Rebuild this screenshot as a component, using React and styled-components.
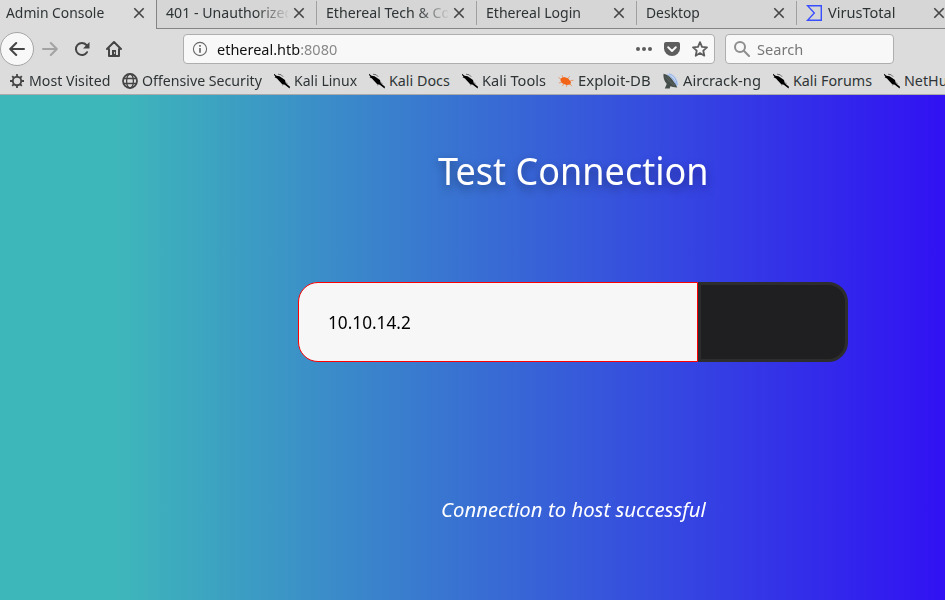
import React from "react";
import styled, { createGlobalStyle } from "styled-components";

const Global = createGlobalStyle`
  * { box-sizing: border-box; }
  html, body { margin: 0; overflow: hidden; }
  body { font-family: "Noto Sans", "Open Sans", sans-serif; }
  svg { display: block; flex: none; }
`;

const Window = styled.div`
  display: flex;
  flex-direction: column;
  width: 945px;
  height: 600px;
  overflow: hidden;
  background: #dcdcdc;
`;

const TabStrip = styled.div`
  display: flex;
  flex: none;
  height: 29px;
`;

const Tab = styled.div`
  display: flex;
  flex: none;
  align-items: center;
  width: ${(p) => (p.$active ? 156 : 160)}px;
  height: 29px;
  padding: 0 11px 3px ${(p) => (p.$active ? 6 : 9)}px;
  color: #2e3436;
  background: ${(p) => (p.$active ? "#dcdcdc" : "#d6d6d6")};
  border-bottom: ${(p) => (p.$active ? "0" : "1px solid #858585")};
  ${(p) => p.$first && "border-left: 1px solid #858585;"}
`;

const Divider = styled.i`
  flex: none;
  align-self: flex-start;
  width: 1px;
  height: 24px;
  margin: 1px 9px 0 -9px;
  background: #a0a0a0;
`;

const TabTitle = styled.span`
  flex: 1;
  min-width: 0;
  margin-right: 5px;
  overflow: hidden;
  white-space: nowrap;
  font-size: 14px;
  line-height: 24px;
  ${(p) => p.$fade && "mask-image: linear-gradient(to right, #000 74%, transparent 102%);"}
`;

const Fit = styled.span`
  display: inline-block;
  white-space: nowrap;
  transform: scaleX(${(p) => p.$x || 1});
  transform-origin: left center;
`;

const Toolbar = styled.div`
  display: flex;
  flex: none;
  align-items: center;
  height: 40px;
`;

const BackButton = styled.div`
  display: flex;
  flex: none;
  align-items: center;
  justify-content: center;
  width: 34px;
  height: 34px;
  border: 1px solid #a5a5a5;
  border-radius: 50%;
  background: #f8f8f8;
`;

const ToolIcon = styled.div`
  display: flex;
  justify-content: center;
  flex: none;
  width: 32px;
`;

const Favicon = styled.div`
  flex: none;
  width: 22px;
`;

const Field = styled.div`
  display: flex;
  flex: none;
  align-items: center;
  width: ${(p) => p.$w}px;
  height: 30px;
  margin-left: ${(p) => p.$gap}px;
  padding: 0 6px 0 8px;
  border: 1px solid #aeaeae;
  border-radius: 4px;
  background: #f8f8f8;
  color: #777;
  font-size: 14.3px;
`;

const Address = styled.span`
  flex: 1;
  margin-left: 9px;
  color: #888;
  b { font-weight: 400; color: #111; }
`;

const Query = styled.span`
  margin-left: 7px;
`;

const FieldIcons = styled.div`
  display: flex;
  align-items: center;
  gap: 12px;
`;

const Bookmarks = styled.div`
  display: flex;
  flex: none;
  height: 26px;
  padding-left: 9px;
  border-bottom: 1px solid #aaa;
  color: #2e3436;
`;

const Bookmark = styled.div`
  display: flex;
  flex: none;
  align-items: center;
  gap: 4px;
  width: ${(p) => p.$w}px;
  padding-bottom: 1px;
  font-size: 14.3px;
  line-height: 20px;
`;

const Page = styled.main`
  display: flex;
  flex: 1;
  flex-direction: column;
  align-items: center;
  padding-left: 201px;
  background: linear-gradient(to right, #3eb7ba 114px, #3111f3 945px);
`;

const Heading = styled.h1`
  margin: 45px 0 0;
  height: 60px;
  width: 271px;
  color: #fff;
  font-size: 39px;
  font-weight: 400;
  line-height: 60px;
  text-shadow: 0 4px 10px rgba(0, 0, 0, 0.4);
`;

const Form = styled.div`
  display: flex;
  width: 550px;
  height: 80px;
  margin-top: 82px;
`;

const HostInput = styled.div`
  width: 400px;
  padding-left: 29px;
  border: 1px solid #f00;
  border-radius: 20px 0 0 20px;
  background: #f7f7f7;
  color: #000;
  font-size: 17.4px;
  line-height: 78px;
`;

const Submit = styled.div`
  width: 150px;
  border: 3px solid #2d2d2d;
  border-radius: 0 20px 20px 0;
  background: #1f1f21;
`;

const Result = styled.p`
  margin: 131px 0 0;
  width: 264px;
  white-space: nowrap;
  color: #fff;
  font-size: 20.4px;
  font-style: italic;
  line-height: 32px;
`;

const Close = () => (
  <svg width="12" height="12" viewBox="0 0 12 12" stroke="#454545" strokeWidth="1.6">
    <path d="M1.3 1.3l9.4 9.4M10.7 1.3l-9.4 9.4" />
  </svg>
);

const Arrow = ({ flip, color }) => (
  <svg width="16" height="16" viewBox="0 0 16 16" fill="none" stroke={color} strokeWidth="2" strokeLinecap="round" strokeLinejoin="round" transform={flip ? "scale(-1 1)" : undefined}>
    <path d="M15 8H1.5M7.2 2L1.2 8l6 6" />
  </svg>
);

const Reload = () => (
  <svg width="16" height="16" viewBox="0 0 16 16" fill="none" stroke="#454545" strokeWidth="2" strokeLinecap="round">
    <path d="M13 11.2A6 6 0 1 1 12.4 4" />
    <path d="M15.5 1v6.5H9z" fill="#454545" stroke="none" />
  </svg>
);

const Home = () => (
  <svg width="16" height="16" viewBox="0 0 16 16" fill="none" stroke="#454545" strokeWidth="2" strokeLinejoin="round" strokeLinecap="round">
    <path d="M1 8l7-7 7 7M3 8v7h10V8" />
    <path d="M6 15V9h4v6z" fill="#454545" stroke="none" />
    <path d="M8.6 11.3v1.2" stroke="#dcdcdc" strokeWidth="1" />
  </svg>
);

const Info = () => (
  <svg width="16" height="16" viewBox="0 0 16 16" fill="none" stroke="#696969">
    <circle cx="8" cy="8" r="6.6" strokeWidth="1.1" />
    <path d="M8 7v4.8M8 4v1.7" strokeWidth="1.7" />
  </svg>
);

const Dots = () => (
  <svg width="16" height="16" viewBox="0 0 16 16" fill="#5d5d5d">
    <circle cx="2" cy="8" r="2" /><circle cx="8" cy="8" r="2" /><circle cx="14" cy="8" r="2" />
  </svg>
);

const Pocket = () => (
  <svg width="16" height="16" viewBox="0 0 16 16">
    <path d="M2 1h12a2 2 0 0 1 2 2v4.5a8 7.5 0 0 1-16 0V3a2 2 0 0 1 2-2z" fill="#5d5d5d" />
    <path d="M4.2 6.3L8 9.9l3.8-3.6" fill="none" stroke="#f8f8f8" strokeWidth="2" strokeLinecap="round" strokeLinejoin="round" />
  </svg>
);

const Star = () => (
  <svg width="16" height="16" viewBox="0 0 16 16" fill="none" stroke="#5d5d5d" strokeWidth="1.8" strokeLinejoin="round">
    <path d="M8 1.2l2 4.6 5 .5-3.7 3.4 1 5L8 12.1l-4.3 2.6 1-5L1 6.3l5-.5z" />
  </svg>
);

const Magnifier = () => (
  <svg width="16" height="16" viewBox="0 0 16 16" fill="none" stroke="#8e8e8e" strokeWidth="2" strokeLinecap="round">
    <circle cx="6" cy="6" r="5" /><path d="M9.8 9.8l5.2 5.2" />
  </svg>
);

const VirusTotal = () => (
  <svg width="16" height="16" viewBox="0 0 16 16" fill="none" stroke="#394eff" strokeWidth="1.4">
    <path d="M1.5 .7H15.3v14.6H1.5L8.3 8z" />
  </svg>
);

const Gear = () => (
  <svg width="16" height="16" viewBox="0 0 16 16" fill="none" stroke="#454545">
    <circle cx="8" cy="8" r="4.2" strokeWidth="1.9" />
    <path d="M8 1v2.5M8 12.5V15M1 8h2.5M12.5 8H15M3.2 3.2L5 5M11 11l1.8 1.8M12.8 3.2L11 5M5 11l-1.8 1.8" strokeWidth="1.8" />
  </svg>
);

const Globe = () => (
  <svg width="16" height="16" viewBox="0 0 16 16" fill="none" stroke="#454545" strokeWidth="1.3">
    <circle cx="8" cy="8" r="7" strokeWidth="1.8" />
    <ellipse cx="8" cy="8" rx="3.4" ry="7" />
    <path d="M1.6 5.5h12.8M1.6 10.5h12.8" />
  </svg>
);

const Kali = () => (
  <svg width="16" height="16" viewBox="0 0 16 16" fill="#000">
    <path d="M0 .8l2.5 2 3 .4 3 2L11 7l.8 3.2 4.2 3.6-.4 1.6-4.8-3.6-2.8-.8L5.2 8 3 5.4.6 4.2l.8-.6L0 2z" />
    <path d="M4 1.2l3.2.6 2 2M9 11l-.4 1.4M11.5 10l2 .3" stroke="#000" strokeWidth=".5" fill="none" />
  </svg>
);

const Exploit = () => (
  <svg width="16" height="16" viewBox="0 0 16 16" fill="#f26418" stroke="#f26418">
    <path d="M2.5 5.5L6 4l4 1.2 3 3.8-.8 2.6-3.6.4-4-1.5-2-2.5z" stroke="none" />
    <path d="M2.5 6L.4 4.2M5 5L4 2.2M9.5 5.5l2.3-2.2M12 8l3.6-.8M4 9.3l-3.2.7M6 10.5l-1.7 2.6M9 11.5l-.6 2.4M12 11l2 2.2" strokeWidth=".9" opacity=".6" />
  </svg>
);

const Aircrack = () => (
  <svg width="16" height="16" viewBox="0 0 16 16">
    <path d="M3.5 .5Q14 0 15.5 12L13.5 14z" fill="#c5d5ef" />
    <path d="M6 .8q7.5 2 8.2 11M4.5 2q7 3 8.6 10" fill="none" stroke="#8fb0e6" strokeWidth="1" />
    <path d="M.5 .8C4 1.4 7 3.6 9.2 6.6s4 5.6 5 7.8C9.500 14.600 5.200 13 3 10S.200 4 .5 .8z" fill="#454e4b" />
    <path d="M4 10.500L1.800 15.500h5L7.500 12z" fill="#454e4b" />
    <path d="M2 3.500q4 6 10 9.800M4.500 3q2 5 7 9" fill="none" stroke="#68736f" strokeWidth=".5" />
  </svg>
);

const tabs = [
  { title: "Admin Console", active: true, x: 0.99 },
  { title: "401 - Unauthorized", fade: true, first: true, x: 1.01 },
  { title: "Ethereal Tech & Co", fade: true, x: 1.01 },
  { title: "Ethereal Login", x: 1.005 },
  { title: "Desktop", x: 0.99 },
  { title: "VirusTotal", icon: true, x: 1.04 },
];

const bookmarks = [
  ["Most Visited", Gear, 113, 0.99],
  ["Offensive Security", Globe, 152, 0.99],
  ["Kali Linux", Kali, 95, 0.98],
  ["Kali Docs", Kali, 93, 1],
  ["Kali Tools", Kali, 96, 1.02],
  ["Exploit-DB", Exploit, 105, 1.04],
  ["Aircrack-ng", Aircrack, 110, 1.03],
  ["Kali Forums", Kali, 111, 1],
  ["NetHu", Kali, 62, 1],
];

export default function App() {
  return (
    <Window>
      <Global />
      <TabStrip>
        {tabs.map((t, i) => (
          <Tab key={t.title} $active={t.active} $first={t.first}>
            {i > 1 && <Divider />}
            {t.icon && <Favicon><VirusTotal /></Favicon>}
            <TabTitle $fade={t.fade}><Fit $x={t.x}>{t.title}</Fit></TabTitle>
            <Close />
          </Tab>
        ))}
      </TabStrip>
      <Toolbar>
        <BackButton><Arrow color="#454545" /></BackButton>
        <ToolIcon><Arrow flip color="#a3a3a3" /></ToolIcon>
        <ToolIcon><Reload /></ToolIcon>
        <ToolIcon><Home /></ToolIcon>
        <Field $w={532} $gap={53}>
          <Info />
          <Address><Fit $x={1.013}><b>ethereal.htb</b>:8080</Fit></Address>
          <FieldIcons><Dots /><Pocket /><Star /></FieldIcons>
        </Field>
        <Field $w={169} $gap={10}>
          <Magnifier />
          <Query><Fit $x={1.02}>Search</Fit></Query>
        </Field>
      </Toolbar>
      <Bookmarks>
        {bookmarks.map(([label, Icon, w, x]) => (
          <Bookmark key={label} $w={w}><Icon /><Fit $x={x}>{label}</Fit></Bookmark>
        ))}
      </Bookmarks>
      <Page>
        <Heading><Fit $x={0.924}>Test Connection</Fit></Heading>
        <Form>
          <HostInput><Fit $x={0.99}>10.10.14.2</Fit></HostInput>
          <Submit />
        </Form>
        <Result><Fit $x={0.998}>Connection to host successful</Fit></Result>
      </Page>
    </Window>
  );
}
